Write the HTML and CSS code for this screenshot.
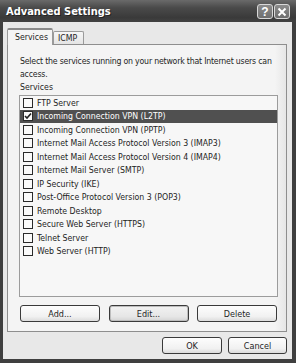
FILE: index.html
```html
<!DOCTYPE html>
<html lang="en">
  <head>
    <meta charset="UTF-8" />
    <title>Advanced Settings</title>
    <link rel="stylesheet" href="styles.css">
  </head>
  <body>
    <div class="window">
      <div class="titlebar">
        <span class="title">Advanced Settings</span>
        <div class="caption-btns">
          <span class="cap-btn help">?</span>
          <span class="cap-btn">
            <svg width="10" height="10" viewBox="0 0 10 10">
              <path d="M1.5 1.5 L8.5 8.5 M8.5 1.5 L1.5 8.5" stroke="#fff" stroke-width="2" />
            </svg>
          </span>
        </div>
      </div>

      <div class="client">
        <div class="tabs">
          <span class="tab active">Services</span>
          <span class="tab">ICMP</span>
        </div>

        <div class="panel">
          <p class="intro">Select the services running on your network that Internet users can access.</p>
          <p class="label">Services</p>
          <ul class="list">
            <li><span class="check"></span>FTP Server</li>
            <li class="selected">
              <span class="check">
                <svg width="8" height="8" viewBox="0 0 8 8">
                  <path d="M1 4 L3 6 L7 1.5" fill="none" stroke="#222" stroke-width="1.6" />
                </svg>
              </span>Incoming Connection VPN (L2TP)
            </li>
            <li><span class="check"></span>Incoming Connection VPN (PPTP)</li>
            <li><span class="check"></span>Internet Mail Access Protocol Version 3 (IMAP3)</li>
            <li><span class="check"></span>Internet Mail Access Protocol Version 4 (IMAP4)</li>
            <li><span class="check"></span>Internet Mail Server (SMTP)</li>
            <li><span class="check"></span>IP Security (IKE)</li>
            <li><span class="check"></span>Post-Office Protocol Version 3 (POP3)</li>
            <li><span class="check"></span>Remote Desktop</li>
            <li><span class="check"></span>Secure Web Server (HTTPS)</li>
            <li><span class="check"></span>Telnet Server</li>
            <li><span class="check"></span>Web Server (HTTP)</li>
          </ul>
          <div class="list-btns">
            <button>Add...</button>
            <button class="focused">Edit...</button>
            <button>Delete</button>
          </div>
        </div>

        <div class="dialog-btns">
          <button class="ok">OK</button>
          <button class="cancel">Cancel</button>
        </div>
      </div>
    </div>
  </body>
</html>
```

FILE: styles.css
```css
* {
  margin: 0;
  padding: 0;
  box-sizing: border-box;
}

body {
  background: #3d3d3d;
  font-family: "DejaVu Sans Condensed", "DejaVu Sans", sans-serif;
  font-stretch: condensed;
  font-size: 8.7px;
  color: #1e1e1e;
}

.window {
  width: 296px;
  height: 363px;
  display: flex;
  flex-direction: column;
  background: #3f3f3f;
}

.titlebar {
  height: 22px;
  flex: none;
  display: flex;
  align-items: center;
  justify-content: space-between;
  padding: 1px 6px 0 6px;
  background: linear-gradient(#6a6a6a, #4a4a4a 35%, #3a3a3a 80%, #424242);
}

.title {
  color: #fff;
  font-weight: bold;
  font-size: 11px;
  text-shadow: 1px 1px #222;
}

.caption-btns {
  display: flex;
  gap: 1px;
}

.cap-btn {
  width: 16px;
  height: 15px;
  border: 1px solid #d8d8d8;
  border-radius: 3px;
  background: linear-gradient(#8c8c8c, #6e6e6e);
  color: #fff;
  display: flex;
  align-items: center;
  justify-content: center;
  font-family: "Liberation Sans", sans-serif;
  font-weight: bold;
  font-size: 12px;
}

.client {
  flex: 1;
  margin: 0 4px 4px 3px;
  background: #e8e8e8;
  padding: 6px 5px 0 4px;
  display: flex;
  flex-direction: column;
}

.tabs {
  display: flex;
  align-items: flex-end;
  height: 16px;
}

.tab {
  width: 31px;
  height: 13px;
  line-height: 12px;
  padding-left: 4px;
  border: 1px solid #9a9a9a;
  border-bottom: none;
  border-radius: 2px 2px 0 0;
  background: linear-gradient(#f6f6f6, #e4e4e4);
}

.tab.active {
  width: 46px;
  height: 17px;
  line-height: 15px;
  padding-left: 7px;
  margin-bottom: -1px;
  background: #f4f4f4;
  border-top: 2px solid #8a8a8a;
  position: relative;
  z-index: 1;
}

.panel {
  height: 288px;
  flex: none;
  border: 1px solid #8e8e8e;
  background: linear-gradient(90deg, #f4f4f4 96%, #e6e6e6);
  padding: 10px 8px 0 11px;
}

.intro {
  line-height: 13px;
  margin-left: 1px;
  letter-spacing: -0.2px;
}

.label {
  line-height: 13px;
  margin-left: 1px;
}

.list {
  list-style: none;
  height: 202px;
  margin-top: 1px;
  border: 1px solid #9c9c9c;
  background: #f7f7f7;
}

.list li {
  height: 13.5px;
  display: flex;
  align-items: center;
  padding-left: 3px;
  white-space: nowrap;
}

.list li.selected {
  background: #505050;
  color: #fff;
}

.check {
  width: 10px;
  height: 10px;
  margin-right: 4px;
  border: 1px solid #2a2a2a;
  background: #fafafa;
  display: flex;
  align-items: center;
  justify-content: center;
}

.list-btns {
  display: flex;
  justify-content: space-between;
  margin-top: 8px;
  padding: 0 1px;
}

button {
  height: 17px;
  width: 80px;
  border: 1px solid #3a3a3a;
  border-radius: 3px;
  background: linear-gradient(#fdfdfd, #f1f1f1 70%, #dcdcdc);
  font-family: inherit;
  font-stretch: condensed;
  font-size: 9px;
  color: #1e1e1e;
}

button.focused {
  background: linear-gradient(#f2f2f2, #e6e6e6 70%, #d4d4d4);
  box-shadow: inset 0 0 0 1px #bdbdbd;
}

.dialog-btns {
  display: flex;
  justify-content: flex-end;
  gap: 6px;
  margin-top: 5px;
}

.ok {
  width: 60px;
}

.cancel {
  width: 59px;
}
```
